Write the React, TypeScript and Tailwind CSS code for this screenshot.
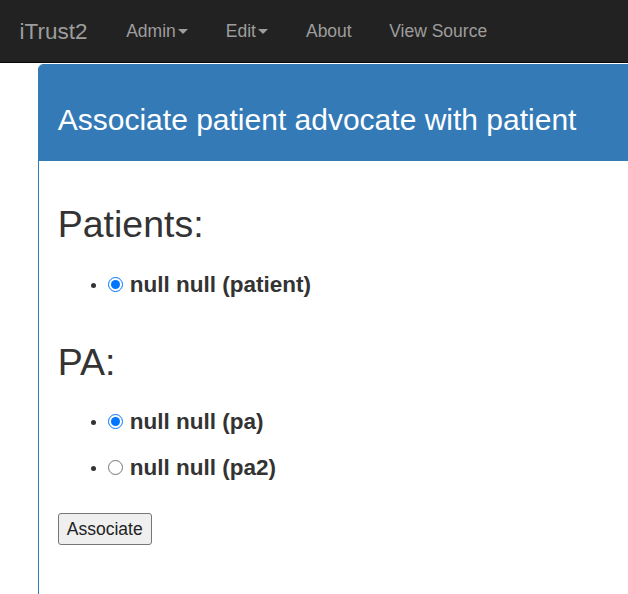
import React from "react";

function Caret() {
  return (
    <span className="inline-block ml-[2.5px] align-middle w-0 h-0 border-t-[5px] border-t-[#9d9d9d] border-x-[5px] border-x-transparent" />
  );
}

function NavLink({ children, caret }: { children: React.ReactNode; caret?: boolean }) {
  return (
    <a className="px-[18.75px] text-[17.5px] text-[#9d9d9d] leading-[25px] whitespace-nowrap">
      {children}
      {caret && <Caret />}
    </a>
  );
}

function Item({ label, name, checked }: { label: string; name: string; checked?: boolean }) {
  return (
    <li className="h-[46px] pt-[14px] leading-[25px] text-[17.5px]">
      <label className="inline-flex items-center h-[25px] align-top">
        <input
          type="radio"
          name={name}
          defaultChecked={checked}
          className="w-[15px] h-[15px] m-0 mr-[7px] accent-[#0075ff]"
        />
        <span className="text-[22.5px] leading-[25px] font-bold text-[#333]">{label}</span>
      </label>
    </li>
  );
}

export default function App() {
  return (
    <div
      className="w-[628px] h-[594px] overflow-hidden bg-white text-[#333]"
      style={{ fontFamily: '"Liberation Sans", Arial, sans-serif' }}
    >
      <nav className="h-[63px] bg-[#222] border-b border-[#080808] flex items-center">
        <a className="pl-[19.5px] pr-[20px] text-[22.5px] text-[#9d9d9d] leading-[25px]">iTrust2</a>
        <NavLink caret>Admin</NavLink>
        <NavLink caret>Edit</NavLink>
        <NavLink>About</NavLink>
        <NavLink>View Source</NavLink>
      </nav>
      <div className="ml-[38px] mt-[1px] w-[640px] border border-[#337ab7] rounded-t-[5px] bg-white">
        <div className="bg-[#337ab7] rounded-tl-[4px] px-[18.75px] pt-[37.5px] pb-[25px]">
          <h3 className="text-[30px] leading-[33px] text-white font-normal">
            Associate patient advocate with patient
          </h3>
        </div>
        <div className="px-[18.75px] pt-[18.75px] pb-[80px]">
          <h2 className="mt-[25px] mb-[12.5px] text-[37.5px] leading-[41.25px] font-normal">Patients:</h2>
          <ul className="list-disc pl-[50px] pb-[12.5px]">
            <Item name="patient" label="null null (patient)" checked />
          </ul>
          <h2 className="mt-[25px] mb-[12.5px] text-[37.5px] leading-[41.25px] font-normal">PA:</h2>
          <ul className="list-disc pl-[50px] pb-[12.5px]">
            <Item name="pa" label="null null (pa)" checked />
            <Item name="pa" label="null null (pa2)" />
          </ul>
          <button className="mt-[13px] h-[32px] px-[8px] bg-[#efefef] border border-[#767676] rounded-[3px] text-[17.5px] text-[#222]">
            Associate
          </button>
        </div>
      </div>
    </div>
  );
}
